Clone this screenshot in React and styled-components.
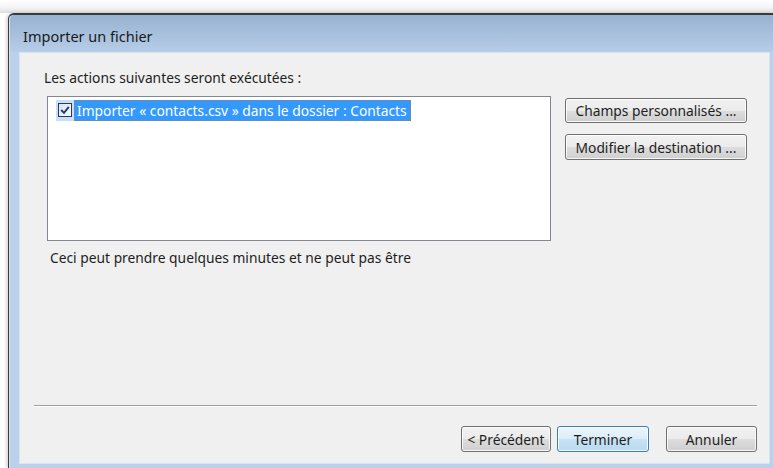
import styled, { createGlobalStyle } from 'styled-components';

const GlobalStyle = createGlobalStyle`
  *, *::before, *::after {
    box-sizing: border-box;
  }
  html, body {
    margin: 0;
    padding: 0;
    background: #ffffff;
  }
  body {
    font-family: "Noto Sans", "Open Sans", sans-serif;
    font-size: 13.8px;
    color: #1e1e1e;
  }
`;

const Page = styled.div`
  width: 773px;
  height: 468px;
  overflow: hidden;
  display: flex;
  flex-direction: column;
  background: #ffffff;
`;

const Backdrop = styled.div`
  height: 13px;
  flex-shrink: 0;
  background: linear-gradient(#ffffff, #f4f4f4 60%, #dcdcdc);
`;

const Window = styled.div`
  flex: 1;
  margin-left: 8px;
  display: flex;
  flex-direction: column;
  border-left: 1px solid #3c3c3c;
  border-top: 2px solid #3a3a3a;
  border-top-left-radius: 6px;
  background: #b9d1ea;
  box-shadow: -2px 0 3px rgba(0, 0, 0, 0.15);
`;

const TitleBar = styled.div`
  height: 37px;
  flex-shrink: 0;
  display: flex;
  align-items: center;
  padding: 4px 0 0 13px;
  border-top-left-radius: 5px;
  background: linear-gradient(#97b2d1, #b6cde7);
  border-left: 1px solid #d6e2ef;
`;

const Title = styled.span`
  font-size: 14.5px;
  color: #1a1a1a;
`;

const Frame = styled.div`
  flex: 1;
  display: flex;
  padding: 0 3px 4px 9px;
  border-left: 1px solid #d6e2ef;
`;

const Client = styled.div`
  flex: 1;
  display: flex;
  flex-direction: column;
  background: #f0f0f0;
  border: 1px solid #dbe4ee;
  padding: 16px 0 11px 24px;
`;

const Label = styled.div`
  line-height: 17px;
  color: #1e1e1e;
  margin-bottom: 10px;
`;

const ActionRow = styled.div`
  display: flex;
  align-items: flex-start;
  gap: 14px;
  padding-left: 3px;
`;

const ListBox = styled.div`
  width: 504px;
  height: 145px;
  background: #ffffff;
  border: 1px solid #828790;
  padding: 2px 0 0 8px;
`;

const Item = styled.div`
  display: flex;
  align-items: center;
  height: 22px;
`;

const CheckHalo = styled.span`
  width: 18px;
  height: 21px;
  display: flex;
  align-items: center;
  justify-content: center;
  background: #c6e0fa;
`;

const CheckBox = styled.span`
  width: 14px;
  height: 14px;
  border: 1px solid #2f3b4c;
  background: linear-gradient(135deg, #d6e4f4, #f7fbff);
  display: flex;
  align-items: center;
  justify-content: center;
`;

const ItemText = styled.span`
  height: 21px;
  line-height: 21px;
  padding: 0 4px 0 3px;
  background: #3399ff;
  color: #ffffff;
  outline: 1px dotted rgba(190, 120, 50, 0.75);
  outline-offset: -1px;
  white-space: nowrap;
`;

const SideButtons = styled.div`
  display: flex;
  flex-direction: column;
  gap: 11px;
  margin-top: 2px;
`;

const Button = styled.button`
  font-family: "Noto Sans", "Open Sans", sans-serif;
  font-size: 13.8px;
  color: #1e1e1e;
  width: ${({ $w }) => $w}px;
  height: ${({ $h }) => $h || 25}px;
  padding: 0;
  border-radius: 3px;
  border: 1px solid ${({ $default }) => ($default ? '#3c7fb1' : '#707070')};
  background: ${({ $default }) =>
    $default
      ? 'linear-gradient(#eaf6fd, #dcedf8 50%, #c7e3f5 51%, #b9d9ee)'
      : 'linear-gradient(#f2f2f2, #ebebeb 50%, #dddddd 51%, #cfcfcf)'};
  box-shadow: inset 0 0 0 1px rgba(255, 255, 255, 0.8);
  cursor: default;
`;

const Notice = styled.div`
  margin: 8px 0 0 6px;
  line-height: 17px;
  color: #1e1e1e;
`;

const Spacer = styled.div`
  flex: 1;
`;

const Separator = styled.div`
  margin: 0 12px 0 -10px;
  border-top: 1px solid #a0a0a0;
  border-bottom: 1px solid #ffffff;
`;

const Footer = styled.div`
  display: flex;
  gap: 6px;
  margin-top: 19px;
  padding-left: 417px;
`;

const CancelButton = styled(Button)`
  margin-left: 11px;
`;

const CheckMark = () => (
  <svg width="10" height="10" viewBox="0 0 10 10">
    <path d="M1.2 5 L4 7.8 L8.8 1.8" fill="none" stroke="#253a63" strokeWidth="1.9" />
  </svg>
);

export default function App() {
  return (
    <>
      <GlobalStyle />
      <Page>
        <Backdrop />
        <Window>
          <TitleBar>
            <Title>Importer un fichier</Title>
          </TitleBar>
          <Frame>
            <Client>
              <Label>Les actions suivantes seront exécutées :</Label>
              <ActionRow>
                <ListBox>
                  <Item>
                    <CheckHalo>
                      <CheckBox>
                        <CheckMark />
                      </CheckBox>
                    </CheckHalo>
                    <ItemText>Importer « contacts.csv » dans le dossier : Contacts</ItemText>
                  </Item>
                </ListBox>
                <SideButtons>
                  <Button $w={182}>Champs personnalisés ...</Button>
                  <Button $w={182} $h={26}>Modifier la destination ...</Button>
                </SideButtons>
              </ActionRow>
              <Notice>Ceci peut prendre quelques minutes et ne peut pas être</Notice>
              <Spacer />
              <Separator />
              <Footer>
                <Button $w={90} $h={26}>&lt; Précédent</Button>
                <Button $w={92} $h={26} $default>Terminer</Button>
                <CancelButton $w={91} $h={26}>Annuler</CancelButton>
              </Footer>
            </Client>
          </Frame>
        </Window>
      </Page>
    </>
  );
}
